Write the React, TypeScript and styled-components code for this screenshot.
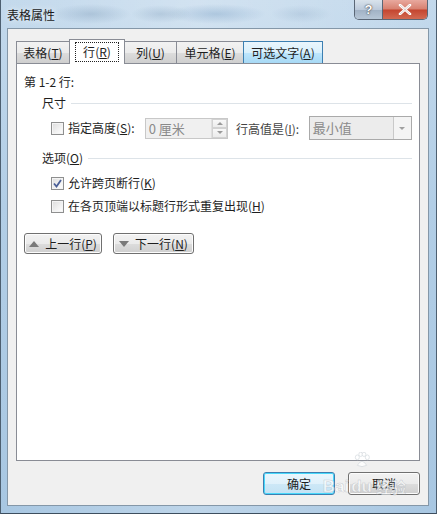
import React from 'react';
import styled, { createGlobalStyle, css } from 'styled-components';

const GlobalStyle = createGlobalStyle`
  html, body {
    margin: 0;
    padding: 0;
    background: #a9c6e0;
  }
  body {
    font-family: "Noto Sans CJK SC", "Noto Sans", "Liberation Sans", sans-serif;
    font-size: 12px;
    color: #1e1e1e;
    white-space: nowrap;
  }
`;

const tabs = [
  { label: '表格', key: 'T', width: 54 },
  { label: '行', key: 'R', width: 56 },
  { label: '列', key: 'U', width: 53 },
  { label: '单元格', key: 'E', width: 68 },
  { label: '可选文字', key: 'A', width: 80 },
];

const Tick = () => (
  <svg width="9" height="9" viewBox="0 0 9 9">
    <path d="M1 4.5 L3.5 7.5 L8 1" fill="none" stroke="#4a5f97" strokeWidth="1.8" />
  </svg>
);

const Key = ({ k }: { k: string }) => (
  <>
    (<u>{k}</u>)
  </>
);

export default function App() {
  return (
    <>
      <GlobalStyle />
      <Window>
        <TitleBar>
          <Title>表格属性</Title>
          <CaptionButtons>
            <HelpButton>?</HelpButton>
            <CloseButton>
              <svg width="14" height="11" viewBox="0 0 14 11">
                <path
                  d="M2 1 L12 10 M12 1 L2 10"
                  stroke="#fff"
                  strokeWidth="2.6"
                  strokeLinecap="round"
                  fill="none"
                />
                <path d="M2 1 L12 10 M12 1 L2 10" stroke="#5a1a10" strokeWidth="0.5" fill="none" opacity="0.4" />
              </svg>
            </CloseButton>
          </CaptionButtons>
        </TitleBar>

        <Client>
          <TabRow>
            {tabs.map((t, i) => (
              <Tab key={t.key} $w={t.width} $active={i === 1} $hover={i === 4}>
                {i === 1 ? (
                  <Focus>
                    {t.label}
                    <Key k={t.key} />
                  </Focus>
                ) : (
                  <span>
                    {t.label}
                    <Key k={t.key} />
                  </span>
                )}
              </Tab>
            ))}
          </TabRow>

          <Panel>
            <Heading>第 1-2 行:</Heading>

            <Group>
              <GroupTitle>
                <span>尺寸</span>
                <Rule />
              </GroupTitle>
              <SizeRow>
                <CheckLabel>
                  <Box />
                  <span>
                    指定高度<Key k="S" />:
                  </span>
                </CheckLabel>
                <Spinner>
                  <SpinValue>0 厘米</SpinValue>
                  <SpinArrows>
                    <SpinBtn>
                      <Tri $up />
                    </SpinBtn>
                    <SpinBtn>
                      <Tri />
                    </SpinBtn>
                  </SpinArrows>
                </Spinner>
                <FieldLabel>
                  行高值是<Key k="I" />:
                </FieldLabel>
                <Select>
                  <SelectValue>最小值</SelectValue>
                  <SelectArrow>
                    <Tri $grey />
                  </SelectArrow>
                </Select>
              </SizeRow>
            </Group>

            <Group $top={9}>
              <GroupTitle>
                <span>
                  选项<Key k="O" />
                </span>
                <Rule />
              </GroupTitle>
              <OptionList>
                <CheckLabel>
                  <Box>
                    <Tick />
                  </Box>
                  <span>
                    允许跨页断行<Key k="K" />
                  </span>
                </CheckLabel>
                <CheckLabel>
                  <Box />
                  <span>
                    在各页顶端以标题行形式重复出现<Key k="H" />
                  </span>
                </CheckLabel>
              </OptionList>
            </Group>

            <NavRow>
              <NavButton $w={78}>
                <NavTri $up />
                <span>
                  上一行<Key k="P" />
                </span>
              </NavButton>
              <NavButton $w={81}>
                <NavTri />
                <span>
                  下一行<Key k="N" />
                </span>
              </NavButton>
            </NavRow>
          </Panel>

          <Footer>
            <DialogButton $default>确定</DialogButton>
            <DialogButton>取消</DialogButton>
            <Watermark>
              <span>Bai</span>
              <Paw>
                <svg width="18" height="16" viewBox="0 0 26 24">
                  <g fill="#fff" stroke="#cfd5db" strokeWidth="1.2">
                    <ellipse cx="6" cy="8" rx="3" ry="3.6" />
                    <ellipse cx="11" cy="3.5" rx="2.8" ry="3.2" />
                    <ellipse cx="16" cy="3.5" rx="2.8" ry="3.2" />
                    <ellipse cx="21" cy="8" rx="3" ry="3.6" />
                    <path d="M6 20 Q13 8 20 20 Q13 24 6 20 Z" />
                  </g>
                </svg>
                <span>du</span>
              </Paw>
              <small>经验</small>
            </Watermark>
          </Footer>
        </Client>
      </Window>
    </>
  );
}

const Window = styled.div`
  width: 437px;
  height: 514px;
  display: flex;
  flex-direction: column;
  box-sizing: border-box;
  background:
    linear-gradient(90deg, rgba(255, 255, 255, 0) 0%, rgba(255, 255, 255, 0.25) 45%, rgba(255, 255, 255, 0) 100%),
    linear-gradient(180deg, #c3d9ec 0%, #b2cee6 40%, #a8c7e2 100%);
  border-left: 1px solid #4d5f70;
  border-right: 1px solid #4d5f70;
  border-bottom: 1px solid #3d4e5e;
  overflow: hidden;
`;

const TitleBar = styled.div`
  height: 28px;
  flex: none;
  display: flex;
  align-items: flex-start;
  justify-content: space-between;
  padding: 0 8px 0 6px;
  background:
    radial-gradient(ellipse 40px 10px at 90px 14px, rgba(120, 150, 180, 0.35), transparent),
    radial-gradient(ellipse 30px 9px at 160px 14px, rgba(120, 150, 180, 0.3), transparent),
    radial-gradient(ellipse 50px 10px at 215px 14px, rgba(110, 150, 190, 0.35), transparent),
    radial-gradient(ellipse 30px 9px at 300px 14px, rgba(130, 160, 190, 0.25), transparent);
`;

const Title = styled.div`
  margin-top: 6px;
  font-size: 12px;
  color: #1a1a1a;
  text-shadow: 0 0 6px rgba(255, 255, 255, 0.9);
`;

const CaptionButtons = styled.div`
  display: flex;
  border: 1px solid #5a6776;
  border-top: none;
  border-radius: 0 0 5px 5px;
  overflow: hidden;
  height: 19px;
`;

const HelpButton = styled.div`
  width: 27px;
  display: flex;
  align-items: center;
  justify-content: center;
  font-family: "Liberation Sans", sans-serif;
  font-size: 13px;
  font-weight: bold;
  color: #fff;
  text-shadow: 0 0 1px #333, 0 0 2px #555;
  background: linear-gradient(180deg, #d9e3ec 0%, #bccadb 50%, #a0b1c4 51%, #b6c6d6 100%);
  border-right: 1px solid #5a6776;
`;

const CloseButton = styled.div`
  width: 44px;
  display: flex;
  align-items: center;
  justify-content: center;
  background: linear-gradient(180deg, #e8a99e 0%, #d7806f 48%, #c4452f 52%, #d26a52 100%);
`;

const Client = styled.div`
  position: relative;
  flex: 1;
  margin: 0 7px 7px 6px;
  padding: 10px 8px 10px 8px;
  display: flex;
  flex-direction: column;
  background: #f0f0f0;
  border: 1px solid #8497a8;
`;

const TabRow = styled.div`
  display: flex;
  align-items: flex-end;
  height: 24px;
  position: relative;
  z-index: 1;
`;

const Tab = styled.div<{ $w: number; $active?: boolean; $hover?: boolean }>`
  box-sizing: border-box;
  width: ${(p) => p.$w}px;
  height: 22px;
  display: flex;
  align-items: center;
  justify-content: center;
  border: 1px solid #898c95;
  border-bottom: none;
  margin-right: -1px;
  background: linear-gradient(180deg, #f2f2f2 0%, #ebebeb 50%, #dddddd 51%, #cfcfcf 100%);
  color: #1e1e1e;
  ${(p) =>
    p.$hover &&
    css`
      background: linear-gradient(180deg, #eaf6fd 0%, #d9f0fc 50%, #bee6fd 51%, #a7d9f5 100%);
      border-color: #3c7fb1;
      z-index: 1;
    `}
  ${(p) =>
    p.$active &&
    css`
      height: 25px;
      margin-bottom: -1px;
      background: #fff;
      z-index: 2;
    `}
`;

const Focus = styled.span`
  outline: 1px dotted #222;
  padding: 1px 7px;
  line-height: 16px;
`;

const Panel = styled.div`
  height: 398px;
  box-sizing: border-box;
  background: #fff;
  border: 1px solid #898c95;
  padding: 9px 7px 0 7px;
  display: flex;
  flex-direction: column;
`;

const Heading = styled.div`
  line-height: 18px;
`;

const Group = styled.div<{ $top?: number }>`
  margin-top: ${(p) => p.$top ?? 3}px;
  padding-left: 18px;
`;

const GroupTitle = styled.div`
  display: flex;
  align-items: center;
  gap: 5px;
  line-height: 18px;
`;

const Rule = styled.div`
  flex: 1;
  height: 1px;
  background: #dde3e8;
  margin-top: 1px;
`;

const SizeRow = styled.div`
  display: flex;
  align-items: center;
  margin-top: 4px;
  padding-left: 9px;
  height: 24px;
`;

const CheckLabel = styled.label`
  display: flex;
  align-items: center;
  gap: 4px;
  line-height: 18px;
`;

const Box = styled.span`
  box-sizing: border-box;
  flex: none;
  width: 13px;
  height: 13px;
  border: 1px solid #8e8f8f;
  background: linear-gradient(135deg, #dcdcdc 0%, #f2f2f2 60%, #fff 100%);
  box-shadow: inset 0 0 0 1px #f4f4f4;
  display: flex;
  align-items: center;
  justify-content: center;
`;

const Spinner = styled.div`
  box-sizing: border-box;
  margin-left: 10px;
  width: 84px;
  height: 21px;
  display: flex;
  border: 1px solid #c8c8c8;
  background: #f0f0f0;
`;

const SpinValue = styled.div`
  flex: 1;
  padding-left: 3px;
  color: #8a8a8a;
  line-height: 19px;
  font-size: 13px;
`;

const SpinArrows = styled.div`
  width: 15px;
  display: flex;
  flex-direction: column;
  border-left: 1px solid #e0e0e0;
`;

const SpinBtn = styled.div`
  flex: 1;
  display: flex;
  align-items: center;
  justify-content: center;
  background: linear-gradient(180deg, #f8f8f8, #ececec);
  border: 1px solid #d2d2d2;
`;

const Tri = styled.span<{ $up?: boolean; $grey?: boolean }>`
  width: 0;
  height: 0;
  border-left: 3px solid transparent;
  border-right: 3px solid transparent;
  ${(p) =>
    p.$up
      ? css`
          border-bottom: 3px solid #9a9a9a;
        `
      : css`
          border-top: 3px solid ${p.$grey ? '#a0a0a0' : '#9a9a9a'};
        `}
`;

const FieldLabel = styled.div`
  margin-left: 8px;
  color: #444;
  width: 73px;
`;

const Select = styled.div`
  box-sizing: border-box;
  width: 104px;
  height: 24px;
  display: flex;
  border: 1px solid #aaaaaa;
  background: #ececec;
`;

const SelectValue = styled.div`
  flex: 1;
  padding-left: 3px;
  line-height: 22px;
  color: #8a8a8a;
  font-size: 13px;
`;

const SelectArrow = styled.div`
  width: 17px;
  display: flex;
  align-items: center;
  justify-content: center;
  border-left: 1px solid #c9c9c9;
  background: #f4f4f4;
`;

const OptionList = styled.div`
  display: flex;
  flex-direction: column;
  gap: 5px;
  margin-top: 7px;
  padding-left: 9px;
`;

const NavRow = styled.div`
  display: flex;
  gap: 11px;
  margin-top: 18px;
`;

const NavButton = styled.div<{ $w: number }>`
  box-sizing: border-box;
  width: ${(p) => p.$w}px;
  height: 21px;
  display: flex;
  align-items: center;
  justify-content: center;
  gap: 6px;
  border: 1px solid #707070;
  border-radius: 3px;
  background: linear-gradient(180deg, #f2f2f2 0%, #ebebeb 50%, #dddddd 51%, #cfcfcf 100%);
  box-shadow: inset 0 0 0 1px #fcfcfc;
`;

const NavTri = styled.span<{ $up?: boolean }>`
  width: 0;
  height: 0;
  border-left: 5px solid transparent;
  border-right: 5px solid transparent;
  ${(p) =>
    p.$up
      ? css`
          border-bottom: 6px solid #7a7a7a;
        `
      : css`
          border-top: 6px solid #7a7a7a;
        `}
`;

const Footer = styled.div`
  display: flex;
  justify-content: flex-end;
  gap: 13px;
  margin-top: 11px;
`;

const DialogButton = styled.div<{ $default?: boolean }>`
  box-sizing: border-box;
  width: 72px;
  height: 23px;
  display: flex;
  align-items: center;
  justify-content: center;
  border: 1px solid ${(p) => (p.$default ? '#3c7fb1' : '#707070')};
  border-radius: 3px;
  background: ${(p) =>
    p.$default
      ? 'linear-gradient(180deg, #eaf6fd 0%, #e0f1fb 50%, #cde8f7 51%, #c4e2f4 100%)'
      : 'linear-gradient(180deg, #f2f2f2 0%, #ebebeb 50%, #dddddd 51%, #cfcfcf 100%)'};
  box-shadow: inset 0 0 0 1px ${(p) => (p.$default ? '#48d8fb' : '#fcfcfc')};
`;

const Watermark = styled.div`
  position: absolute;
  right: 22px;
  bottom: 9px;
  display: flex;
  align-items: flex-end;
  gap: 2px;
  pointer-events: none;
  font-family: "Liberation Sans", sans-serif;
  font-size: 17px;
  line-height: 18px;
  font-weight: bold;
  color: rgba(255, 255, 255, 0.7);
  -webkit-text-stroke: 0.5px rgba(150, 160, 170, 0.5);
  small {
    font-family: "Noto Sans CJK SC", sans-serif;
    font-size: 15px;
    margin-left: 2px;
  }
`;

const Paw = styled.div`
  display: flex;
  flex-direction: column;
  align-items: center;
  svg {
    margin-bottom: 10px;
    opacity: 0.8;
  }
`;
